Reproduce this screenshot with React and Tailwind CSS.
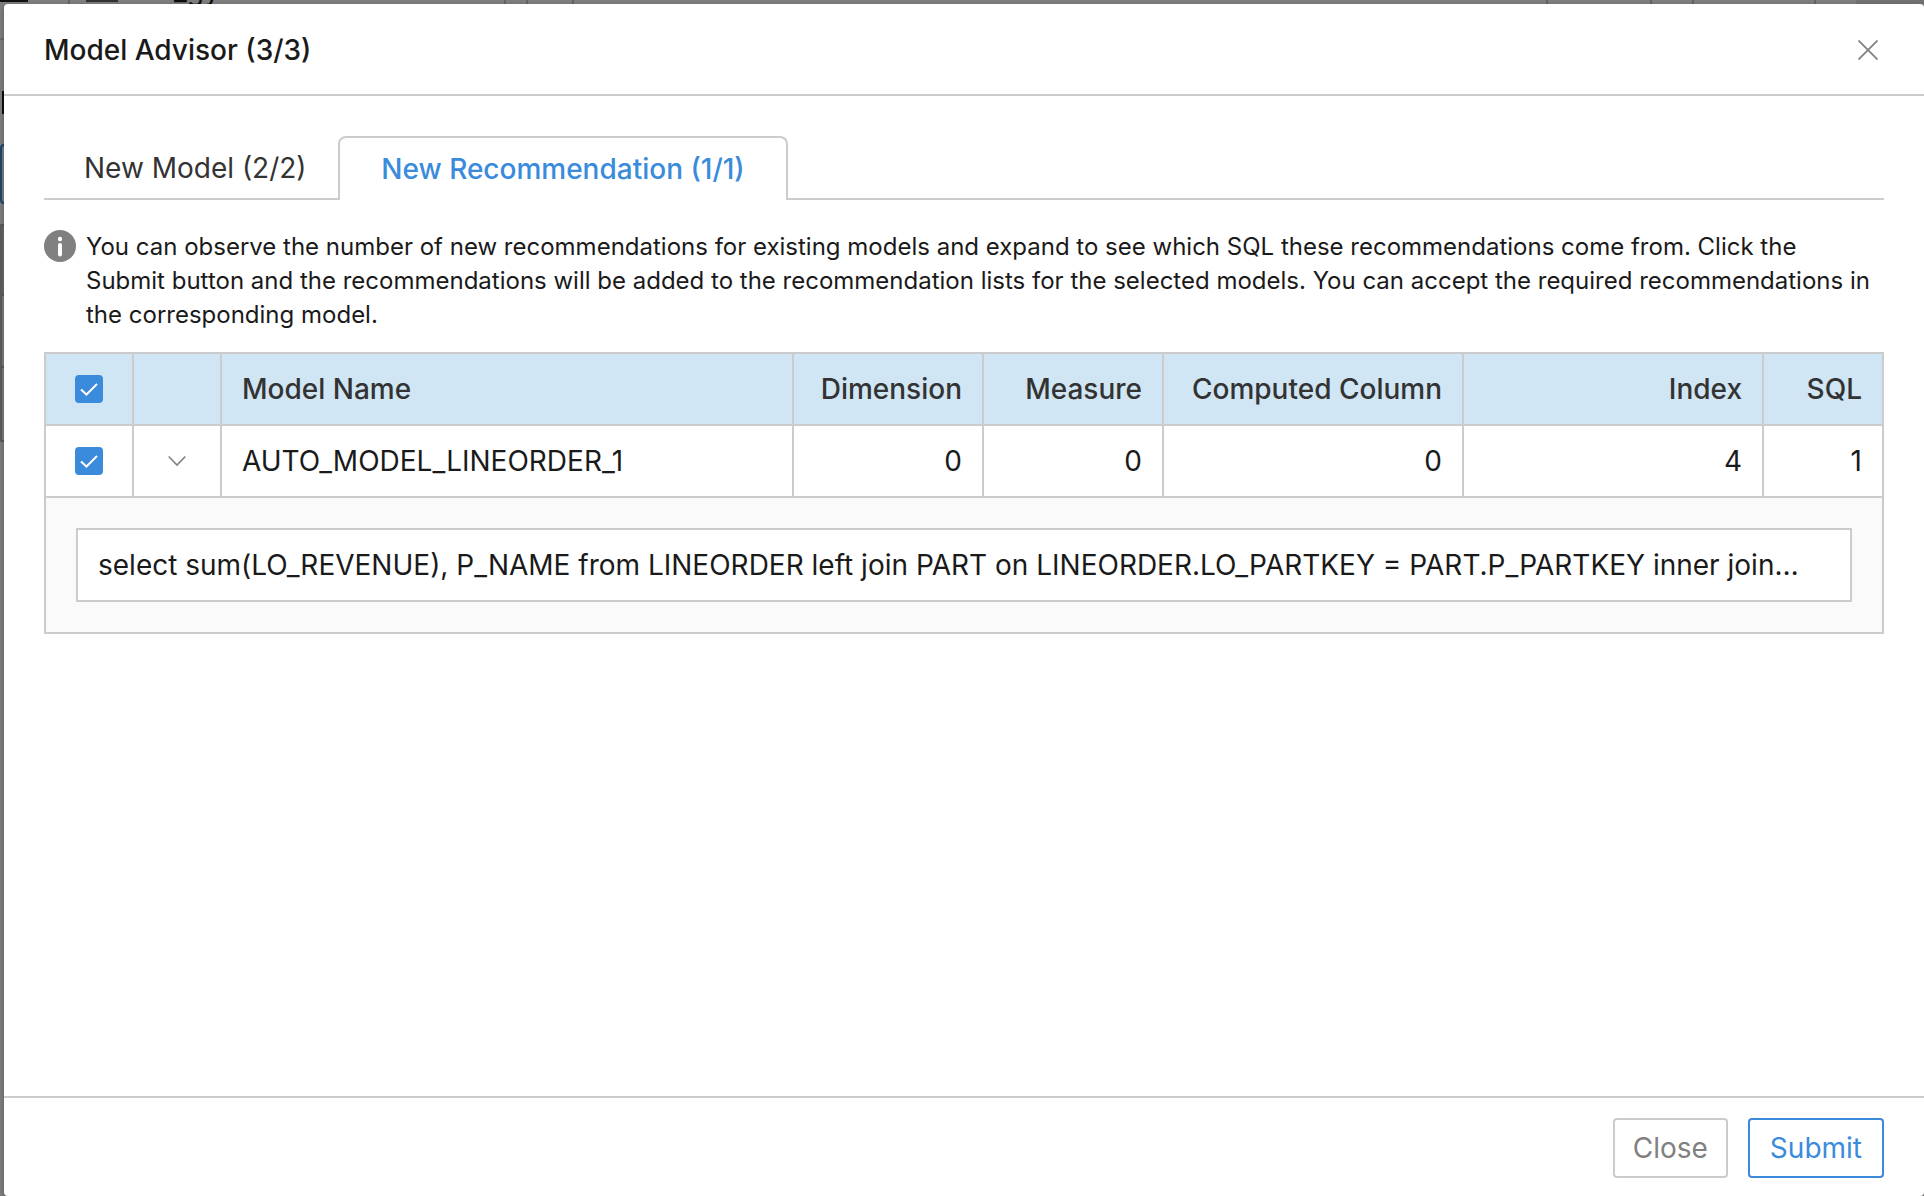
import { useState } from "react";

const columns = [
  { key: "dimension", label: "Dimension", value: 0 },
  { key: "measure", label: "Measure", value: 0 },
  { key: "computed", label: "Computed Column", value: 0 },
  { key: "index", label: "Index", value: 4 },
  { key: "sql", label: "SQL", value: 1 },
];

function Checkbox({ label, checked, onChange }) {
  return (
    <label className="relative mx-auto block size-7">
      <input
        type="checkbox"
        aria-label={label}
        checked={checked}
        onChange={(e) => onChange(e.target.checked)}
        className="peer block size-7 appearance-none rounded border-2 border-[#ccc] bg-white checked:border-[#3a8bdb] checked:bg-[#3a8bdb]"
      />
      <svg viewBox="0 0 28 28" className="pointer-events-none absolute inset-0 hidden size-7 peer-checked:block" fill="none" stroke="#fff" strokeWidth="2">
        <path d="M6 14.5l5.5 5L22 9" />
      </svg>
    </label>
  );
}

// The dimmed page whose edges show around the dialog.
function Backdrop() {
  return (
    <div aria-hidden="true" className="absolute inset-0 overflow-hidden bg-[#7f7f7f]">
      <div className="flex h-1 items-stretch">
        <div className="h-0.5 w-7 bg-[#111]" />
        <div className="ml-10 w-0.5 bg-[#666]" />
        <div className="ml-4 h-0.5 w-8 bg-[#333]" />
        <div className="ml-14 flex w-9 items-end text-[28px] leading-none text-[#0d0d0d]">_gy</div>
        <div className="ml-[294px] w-0.5 bg-[#666]" />
        <div className="ml-5 w-0.5 bg-[#666]" />
        <div className="ml-11 w-0.5 bg-[#666]" />
        <div className="grow" />
        <div className="w-0.5 bg-[#666]" />
        <div className="ml-[102px] w-0.5 bg-[#666]" />
        <div className="ml-10 w-0.5 bg-[#666]" />
        <div className="ml-30 w-0.5 bg-[#666]" />
        <div className="ml-10 w-[68px] bg-[#737373]" />
      </div>
      <div className="w-1">
        <div className="mt-[34px] h-0.5 bg-[#6e6e6e]" />
        <div className="mt-[51px] ml-0.5 h-[23px] bg-[#0d0d0d]" />
        <div className="mt-[30px] h-15 w-5 rounded border-2 border-[#1d4670]" />
        <div className="mt-5 h-[72px] w-5 border-2 border-[#5c5c5c] bg-[#636c73]" />
        <div className="h-[72px] w-5 border-2 border-t-0 border-[#5c5c5c]" />
        <div className="h-[74px] w-5 border-2 border-t-0 border-[#5c5c5c]" />
      </div>
    </div>
  );
}

export default function App() {
  const [all, setAll] = useState(true);
  const [row, setRow] = useState(true);
  const [open, setOpen] = useState(true);
  const cell = "h-[72px] border-2 border-[#ccc] px-5 py-0";

  return (
    <div className="relative min-h-screen font-['Inter',sans-serif] text-[#1a1a1a]">
      <Backdrop />
      <main className="relative flex min-h-screen flex-col pt-1 pl-1">
        <section role="dialog" aria-labelledby="title" className="flex grow flex-col rounded bg-white shadow-[0_2px_6px_rgba(0,0,0,0.3)]">
          <header className="flex h-23 items-center justify-between border-b-2 border-[#ccc] px-10 pt-0.5">
            <h1 id="title" className="text-[28px] leading-9 font-medium">Model Advisor (3/3)</h1>
            <button type="button" aria-label="Close dialog" className="grid size-8 place-items-center">
              <svg viewBox="0 0 20 20" className="size-5" fill="none" stroke="#808080" strokeWidth="1.8">
                <path d="M0.5 0.5l19 19M19.5 0.5l-19 19" />
              </svg>
            </button>
          </header>

          <div className="grow px-10 pt-10">
            <div role="tablist" className="flex h-16 text-[28px]">
              <button type="button" role="tab" aria-selected="false" className="w-[294px] border-y-2 border-t-transparent border-b-[#ccc] pl-10 text-left whitespace-nowrap text-[#333]">
                New Model (2/2)
              </button>
              <button type="button" role="tab" aria-selected="true" className="w-[450px] rounded-t-lg border-2 border-b-0 border-[#ccc] font-medium whitespace-nowrap text-[#3a8bdb]">
                New Recommendation (1/1)
              </button>
              <div className="grow border-b-2 border-[#ccc]" />
            </div>

            <div className="mt-[30px] flex items-start gap-2.5 pr-2.5">
              <svg viewBox="0 0 32 32" className="size-8 shrink-0">
                <circle cx="16" cy="16" r="16" fill="#808080" />
                <circle cx="16" cy="9" r="2.2" fill="#fff" />
                <path d="M16 15v9.5" stroke="#fff" strokeWidth="4" strokeLinecap="round" />
              </svg>
              <p className="text-[24px] leading-[34px]">
                You can observe the number of new recommendations for existing models and expand to see which SQL these recommendations come from. Click the Submit button and the recommendations will be added to the recommendation lists for the selected models. You can accept the required recommendations in the corresponding model.
              </p>
            </div>

            <table className="mt-5 w-full table-fixed border-collapse text-[28px]">
              <colgroup>
                <col className="w-[88px]" />
                <col className="w-[88px]" />
                <col />
                <col className="w-[190px]" />
                <col className="w-[180px]" />
                <col className="w-[300px]" />
                <col className="w-[300px]" />
                <col className="w-[120px]" />
              </colgroup>
              <thead>
                <tr className="bg-[#d0e6f5] text-[#333]">
                  <th className={cell}><Checkbox label="Select all models" checked={all} onChange={setAll} /></th>
                  <th className={cell} />
                  <th className={`${cell} text-left font-medium`}>Model Name</th>
                  {columns.map((c) => (
                    <th key={c.key} className={`${cell} text-right font-medium whitespace-nowrap`}>{c.label}</th>
                  ))}
                </tr>
              </thead>
              <tbody>
                <tr>
                  <td className={cell}><Checkbox label="Select AUTO_MODEL_LINEORDER_1" checked={row} onChange={setRow} /></td>
                  <td className={cell}>
                    <button type="button" aria-label="Toggle SQL list" aria-expanded={open} onClick={() => setOpen(!open)} className="mx-auto grid size-7 place-items-center">
                      <svg viewBox="0 0 18 12" className="h-3 w-[18px]" fill="none" stroke="#808080" strokeWidth="1.6">
                        <path d="M0.7 1.5l8.3 8.5 8.3-8.5" />
                      </svg>
                    </button>
                  </td>
                  <td className={cell}>AUTO_MODEL_LINEORDER_1</td>
                  {columns.map((c) => (
                    <td key={c.key} className={`${cell} text-right`}>{c.value}</td>
                  ))}
                </tr>
                {open && (
                  <tr className="bg-[#fafafa]">
                    <td colSpan={8} className="border-2 border-[#ccc] px-[30px] py-[30px]">
                      <div className="truncate border-2 border-[#ccc] bg-white px-5 leading-[70px]">
                        select sum(LO_REVENUE), P_NAME from LINEORDER left join PART on LINEORDER.LO_PARTKEY = PART.P_PARTKEY inner join…
                      </div>
                    </td>
                  </tr>
                )}
              </tbody>
            </table>
          </div>

          <footer className="flex justify-end gap-5 border-t-2 border-[#ccc] px-10 pt-5 pb-[18px] text-[28px]">
            <button type="button" className="h-15 rounded border-2 border-[#ccc] px-[18px] text-[#808080]">Close</button>
            <button type="button" className="h-15 rounded border-2 border-[#3a8bdb] px-5 text-[#3a8bdb]">Submit</button>
          </footer>
        </section>
      </main>
    </div>
  );
}
